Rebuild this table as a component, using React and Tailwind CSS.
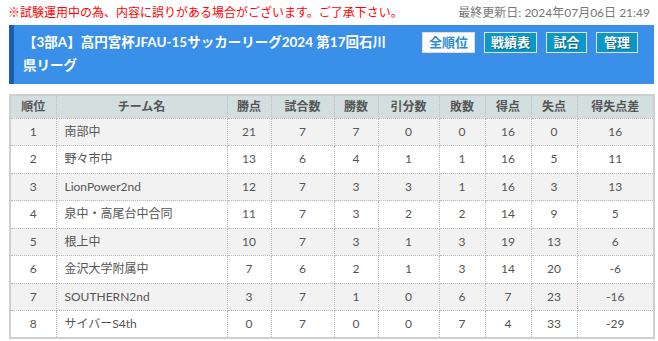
import React from 'react';

const rows = [
  [1, '南部中', 21, 7, 7, 0, 0, 16, 0, 16],
  [2, '野々市中', 13, 6, 4, 1, 1, 16, 5, 11],
  [3, 'LionPower2nd', 12, 7, 3, 3, 1, 16, 3, 13],
  [4, '泉中・高尾台中合同', 11, 7, 3, 2, 2, 14, 9, 5],
  [5, '根上中', 10, 7, 3, 1, 3, 19, 13, 6],
  [6, '金沢大学附属中', 7, 6, 2, 1, 3, 14, 20, -6],
  [7, 'SOUTHERN2nd', 3, 7, 1, 0, 6, 7, 23, -16],
  [8, 'サイバーS4th', 0, 7, 0, 0, 7, 4, 33, -29],
];

const heads = ['順位', 'チーム名', '勝点', '試合数', '勝数', '引分数', '敗数', '得点', '失点', '得失点差'];
const widths = ['w-[46px]', 'w-[171px]', 'w-[44px]', 'w-[63px]', 'w-[44px]', 'w-[61px]', 'w-[46px]', 'w-[46px]', 'w-[46px]', 'w-[77px]'];

export default function App() {
  return (
    <div className="w-[658px] h-[341px] bg-white overflow-hidden font-['Lato','Noto_Sans_CJK_JP',sans-serif]">
      <div className="flex items-center justify-between pl-[8px] pr-[8px] h-[25px] text-[12px]">
        <span className="text-[#ff0000]">※試験運用中の為、内容に誤りがある場合がございます。ご了承下さい。</span>
        <span className="text-[#777]">最終更新日: 2024年07月06日 21:49</span>
      </div>

      <div className="mx-[9px] mr-[4px] flex items-start justify-between bg-[#3a8fe9] border-l-[5px] border-[#1b5ea9] h-[59px]">
        <h1 className="w-[384px] pl-[9px] pt-[6px] text-[13.5px] leading-[23px] font-bold text-white">
          【3部A】高円宮杯JFAU-15サッカーリーグ2024 第17回石川県リーグ
        </h1>
        <div className="flex gap-[9px] pt-[7px] pr-[16px]">
          <span className="h-[21px] w-[53px] flex items-center justify-center bg-white border border-[#ddd] text-[#2c8ad6] text-[13px] font-bold">全順位</span>
          <span className="h-[21px] w-[53px] flex items-center justify-center bg-[#0b98c9] border border-[#e2e2e2] text-white text-[13px] font-bold [text-shadow:1px_1px_1px_rgba(0,0,0,0.4)]">戦績表</span>
          <span className="h-[21px] w-[41px] flex items-center justify-center bg-[#0b98c9] border border-[#e2e2e2] text-white text-[13px] font-bold [text-shadow:1px_1px_1px_rgba(0,0,0,0.4)]">試合</span>
          <span className="h-[21px] w-[42px] flex items-center justify-center bg-[#0b98c9] border border-[#e2e2e2] text-white text-[13px] font-bold [text-shadow:1px_1px_1px_rgba(0,0,0,0.4)]">管理</span>
        </div>
      </div>

      <div className="pl-[9px] pt-[10px]">
        <table className="w-[645px] table-fixed border-collapse border-2 border-[#cfcfcf] text-[12px] text-[#555]">
          <colgroup>
            {widths.map((w, i) => (
              <col key={i} className={w} />
            ))}
          </colgroup>
          <thead>
            <tr className="bg-[#d3dfdf] h-[23px]">
              {heads.map((h, i) => (
                <th key={i} className="font-bold text-center border border-dotted border-[#bbb] p-0">
                  {h}
                </th>
              ))}
            </tr>
          </thead>
          <tbody>
            {rows.map((r, i) => (
              <tr key={i} className={`h-[27.5px] ${i % 2 === 0 ? 'bg-[#f2f2f2]' : 'bg-white'}`}>
                {r.map((v, j) => (
                  <td
                    key={j}
                    className={`border border-dotted border-[#bbb] p-0 ${j === 1 ? 'text-left pl-[8px]' : 'text-center'}`}
                  >
                    {v}
                  </td>
                ))}
              </tr>
            ))}
          </tbody>
        </table>
      </div>
    </div>
  );
}
